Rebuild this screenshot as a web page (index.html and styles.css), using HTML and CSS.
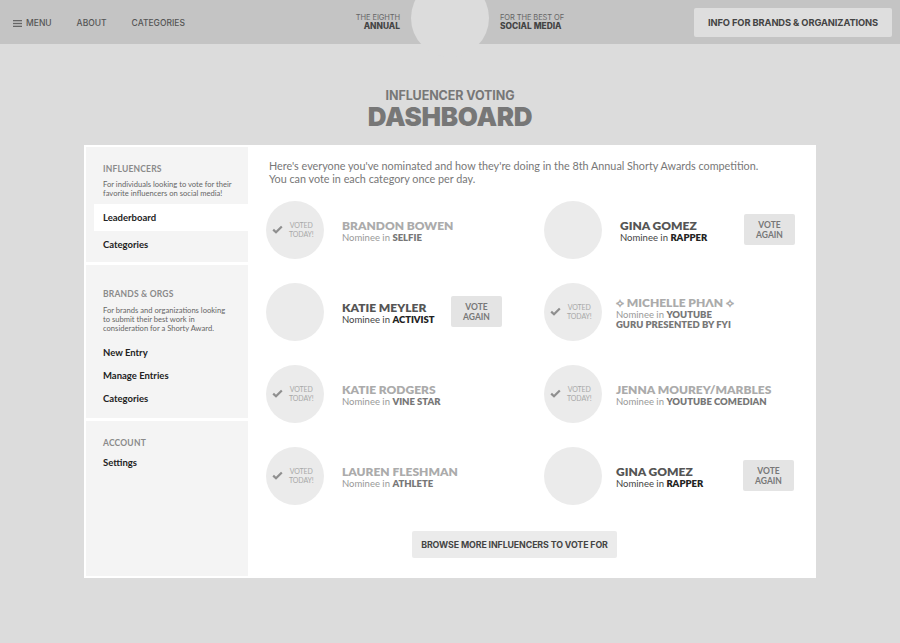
FILE: index.html
```html
<!DOCTYPE html>
<html lang="en">
<head>
<meta charset="utf-8">
<title>Influencer Voting Dashboard</title>
<link rel="stylesheet" href="styles.css">
</head>
<body>
<header class="topbar">
  <nav class="nav">
    <a class="nav-link menu"><svg class="burger" width="9" height="7" viewBox="0 0 9 7"><rect x="0" y="0" width="9" height="1.3" fill="#666"/><rect x="0" y="2.85" width="9" height="1.3" fill="#666"/><rect x="0" y="5.7" width="9" height="1.3" fill="#666"/></svg>MENU</a>
    <a class="nav-link">ABOUT</a>
    <a class="nav-link">CATEGORIES</a>
  </nav>
  <div class="brand">
    <div class="brand-text left"><span class="light">THE EIGHTH</span><span class="bold">ANNUAL</span></div>
    <div class="logo"></div>
    <div class="brand-text right"><span class="light">FOR THE BEST OF</span><span class="bold">SOCIAL MEDIA</span></div>
  </div>
  <div class="top-actions">
    <a class="info-btn">INFO FOR BRANDS &amp; ORGANIZATIONS</a>
  </div>
</header>

<section class="title">
  <div class="title-sub">INFLUENCER VOTING</div>
  <h1 class="title-main">DASHBOARD</h1>
</section>

<main class="panel">
  <aside class="sidebar">
    <div class="side-section s1">
      <div class="side-head">INFLUENCERS</div>
      <p class="side-desc">For individuals looking to vote for their favorite influencers on social media!</p>
      <a class="side-item active">Leaderboard</a>
      <a class="side-item">Categories</a>
    </div>
    <div class="side-section s2">
      <div class="side-head">BRANDS &amp; ORGS</div>
      <p class="side-desc">For brands and organizations looking to submit their best work in consideration for a Shorty Award.</p>
      <a class="side-item small">New Entry</a>
      <a class="side-item small">Manage Entries</a>
      <a class="side-item small">Categories</a>
    </div>
    <div class="side-section s3">
      <div class="side-head">ACCOUNT</div>
      <a class="side-item small">Settings</a>
    </div>
  </aside>

  <div class="content">
    <p class="intro">Here's everyone you've nominated and how they're doing in the 8th Annual Shorty Awards competition.<br>You can vote in each category once per day.</p>

    <div class="grid">
      <div class="card voted">
        <div class="avatar"><svg class="check" width="11" height="9" viewBox="0 0 11 9"><path d="M1.2 4.6 L4 7.3 L9.8 1.4" fill="none" stroke="#8f8f8f" stroke-width="2.2"/></svg><span class="voted-txt">VOTED<br>TODAY!</span></div>
        <div class="info"><div class="name">BRANDON BOWEN</div><div class="nom">Nominee in <b>SELFIE</b></div></div>
      </div>
      <div class="card right wide">
        <div class="avatar"></div>
        <div class="info w-r1"><div class="name">GINA GOMEZ</div><div class="nom">Nominee in <b>RAPPER</b></div></div>
        <a class="vote-btn">VOTE<br>AGAIN</a>
      </div>

      <div class="card">
        <div class="avatar"></div>
        <div class="info w-l"><div class="name">KATIE MEYLER</div><div class="nom">Nominee in <b>ACTIVIST</b></div></div>
        <a class="vote-btn">VOTE<br>AGAIN</a>
      </div>
      <div class="card right voted">
        <div class="avatar"><svg class="check" width="11" height="9" viewBox="0 0 11 9"><path d="M1.2 4.6 L4 7.3 L9.8 1.4" fill="none" stroke="#8f8f8f" stroke-width="2.2"/></svg><span class="voted-txt">VOTED<br>TODAY!</span></div>
        <div class="info"><div class="name">&#x27E1; MICHELLE PH&#x39B;N &#x27E1;</div><div class="nom">Nominee in <b>YOUTUBE<br>GURU PRESENTED BY FYI</b></div></div>
      </div>

      <div class="card voted">
        <div class="avatar"><svg class="check" width="11" height="9" viewBox="0 0 11 9"><path d="M1.2 4.6 L4 7.3 L9.8 1.4" fill="none" stroke="#8f8f8f" stroke-width="2.2"/></svg><span class="voted-txt">VOTED<br>TODAY!</span></div>
        <div class="info"><div class="name">KATIE RODGERS</div><div class="nom">Nominee in <b>VINE STAR</b></div></div>
      </div>
      <div class="card right voted">
        <div class="avatar"><svg class="check" width="11" height="9" viewBox="0 0 11 9"><path d="M1.2 4.6 L4 7.3 L9.8 1.4" fill="none" stroke="#8f8f8f" stroke-width="2.2"/></svg><span class="voted-txt">VOTED<br>TODAY!</span></div>
        <div class="info"><div class="name">JENNA MOUREY/MARBLES</div><div class="nom">Nominee in <b>YOUTUBE COMEDIAN</b></div></div>
      </div>

      <div class="card voted">
        <div class="avatar"><svg class="check" width="11" height="9" viewBox="0 0 11 9"><path d="M1.2 4.6 L4 7.3 L9.8 1.4" fill="none" stroke="#8f8f8f" stroke-width="2.2"/></svg><span class="voted-txt">VOTED<br>TODAY!</span></div>
        <div class="info"><div class="name">LAUREN FLESHMAN</div><div class="nom">Nominee in <b>ATHLETE</b></div></div>
      </div>
      <div class="card right">
        <div class="avatar"></div>
        <div class="info w-r2"><div class="name">GINA GOMEZ</div><div class="nom">Nominee in <b>RAPPER</b></div></div>
        <a class="vote-btn">VOTE<br>AGAIN</a>
      </div>
    </div>

    <div class="browse-row"><a class="browse-btn">BROWSE MORE INFLUENCERS TO VOTE FOR</a></div>
  </div>
</main>
</body>
</html>
```
FILE: styles.css
```css
* { box-sizing: border-box; }
html, body { margin: 0; padding: 0; }
body {
  background: #dcdcdc;
  font-family: Lato, "Open Sans", sans-serif;
  color: #444;
  height: 643px;
  overflow: hidden;
}
a { text-decoration: none; color: inherit; }

/* header */
.topbar {
  height: 44px;
  background: #c4c4c4;
  display: grid;
  grid-template-columns: 1fr auto 1fr;
  align-items: center;
  padding: 0 8px;
  font-family: Inter, "Open Sans", sans-serif;
}
.nav { display: flex; align-items: center; gap: 25px; padding-left: 5px; }
.nav-link {
  font-size: 8.5px;
  font-weight: 500;
  color: #555;
  display: flex;
  align-items: center;
  padding-top: 2px;
}
.burger { margin-right: 4px; }
.brand { display: flex; align-items: flex-start; gap: 11px; height: 44px; }
.brand-text {
  display: flex;
  flex-direction: column;
  font-size: 7.5px;
  line-height: 9px;
  padding-top: 13px;
  width: 80px;
}
.brand-text.left { text-align: right; }
.brand-text .light { color: #666; font-weight: 400; letter-spacing: -0.1px; }
.brand-text .bold { color: #444; font-weight: 800; font-size: 8.4px; }
.logo {
  width: 78px;
  height: 78px;
  border-radius: 50%;
  background: #dcdcdc;
  margin-top: -21px;
}
.top-actions { display: flex; justify-content: flex-end; }
.info-btn {
  background: #dedede;
  border-radius: 2px;
  height: 29px;
  width: 198px;
  display: flex;
  align-items: center;
  justify-content: center;
  font-size: 9.3px;
  font-weight: 700;
  color: #444;
  letter-spacing: -0.1px;
}

/* title */
.title { text-align: center; padding-top: 45px; font-family: Inter, "Open Sans", sans-serif; }
.title-sub { font-size: 12.5px; line-height: 14px; font-weight: 700; color: #777; letter-spacing: -0.1px; }
.title-main { margin: 0; font-size: 26px; line-height: 28px; font-weight: 900; color: #777; letter-spacing: -0.3px; }

/* panel */
.panel {
  width: 732px;
  height: 433px;
  margin: 14px auto 0;
  background: #fff;
  display: flex;
  padding: 2px 0 2px 2px;
}
.sidebar {
  width: 162px;
  flex: none;
  display: flex;
  flex-direction: column;
}
.side-section { background: #f4f4f4; }
.side-section.s1 { padding: 15px 0 4px 8px; }
.side-section.s2 { padding: 22px 0 8px 8px; margin-top: 3px; }
.side-section.s3 { padding: 15px 0 0 8px; margin-top: 3px; flex: 1; }
.side-head {
  font-size: 8.5px;
  line-height: 14px;
  font-weight: 700;
  color: #8a8a8a;
  letter-spacing: 0.2px;
  padding-left: 9px;
}
.side-desc {
  margin: 4px 0 0 9px;
  font-size: 7.6px;
  line-height: 9px;
  color: #666;
  width: 138px;
}
.s1 .side-desc { margin-bottom: 6px; }
.s2 .side-desc { margin-bottom: 8px; margin-top: 5px; width: 127px; }
.side-item {
  display: flex;
  align-items: center;
  height: 27px;
  padding-left: 9px;
  font-size: 9.5px;
  font-weight: 700;
  color: #222;
}
.side-item.active { background: #fff; }
.side-item.small { height: 23px; }
.s3 .side-item { margin-top: 1px; }

/* content */
.content { flex: 1; padding: 11.5px 0 0 18px; display: flex; flex-direction: column; }
.intro {
  margin: 0 0 16px 3px;
  font-size: 10.8px;
  line-height: 13px;
  color: #777;
}
.grid {
  display: grid;
  grid-template-columns: 278px 1fr;
  row-gap: 24px;
}
.card { display: flex; align-items: center; height: 58px; }
.avatar {
  width: 58px;
  height: 58px;
  border-radius: 50%;
  background: #ebebeb;
  flex: none;
  display: flex;
  align-items: center;
  padding-left: 6px;
}
.check { flex: none; margin-right: 6px; }
.voted-txt {
  font-size: 7px;
  line-height: 9px;
  color: #a8a8a8;
  text-align: center;
  letter-spacing: -0.1px;
}
.info { margin-left: 18px; padding-top: 3px; }
.card.right .info { margin-left: 14px; }
.card.right.wide .info { margin-left: 18px; }
.info.w-l { width: 109px; }
.info.w-r1 { width: 124px; }
.info.w-r2 { width: 127px; }
.name {
  font-size: 12px;
  line-height: 14px;
  font-weight: 800;
  color: #555;
  white-space: nowrap;
}
.nom { font-size: 9.5px; line-height: 10px; color: #444; }
.nom b { color: #222; font-weight: 800; }
.voted .name { color: #ababab; }
.voted .nom { color: #999; }
.voted .nom b { color: #777; }
.vote-btn {
  width: 51px;
  height: 31px;
  background: #e4e4e4;
  border-radius: 2px;
  display: flex;
  align-items: center;
  justify-content: center;
  text-align: center;
  font-size: 8.5px;
  line-height: 10px;
  font-weight: 700;
  color: #777;
}

.browse-row { padding: 26px 0 0 146px; display: flex; }
.browse-btn {
  width: 205px;
  height: 27px;
  background: #ebebeb;
  border-radius: 2px;
  display: flex;
  align-items: center;
  justify-content: center;
  font-family: Inter, "Open Sans", sans-serif;
  font-size: 8.8px;
  font-weight: 700;
  color: #444;
  letter-spacing: -0.1px;
}
```
